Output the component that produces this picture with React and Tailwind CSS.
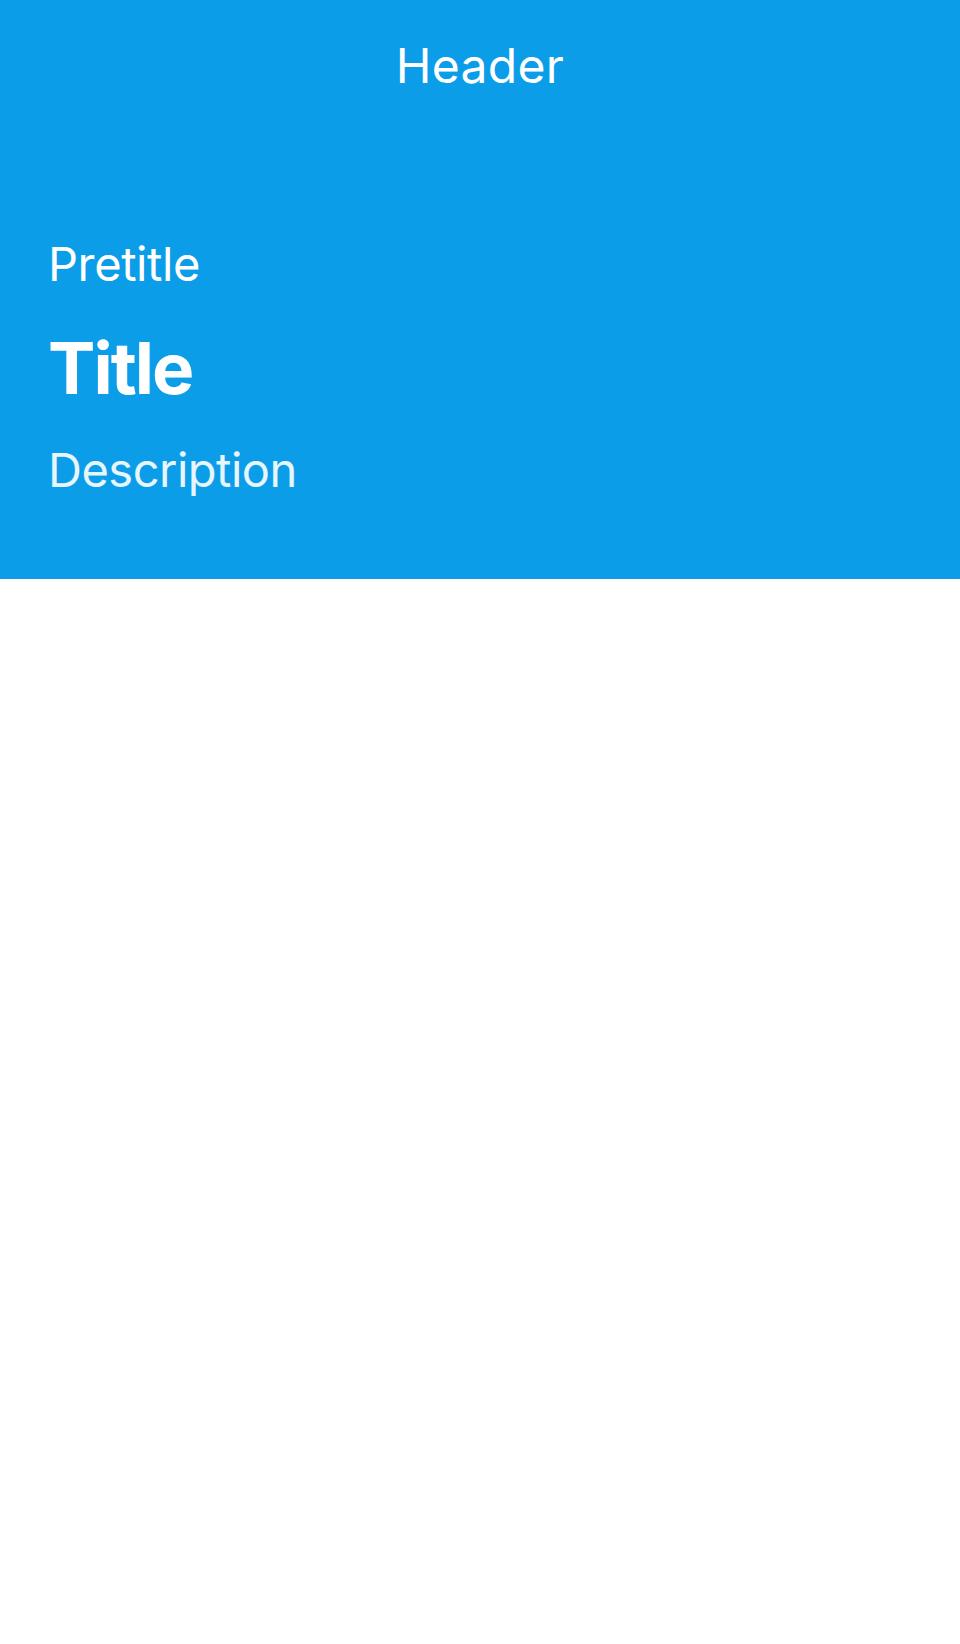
export default function App() {
  return (
    <div className="min-h-screen bg-white font-['Inter',sans-serif] text-white">
      <div className="bg-[#0c9de9]">
        <header className="flex h-[131px] items-center justify-center">
          <h1 className="text-[48px] leading-[48px] tracking-[0.3px]">Header</h1>
        </header>
        <section className="px-[48px] pt-[109px] pb-[85px]">
          <p className="text-[47px] leading-[48px] tracking-[-0.4px]">Pretitle</p>
          <h2 className="mt-[44px] text-[71px] font-bold leading-[72px] tracking-[-2px]">Title</h2>
          <p className="mt-[42px] text-[47px] leading-[48px] tracking-[-0.5px] text-white/90">Description</p>
        </section>
      </div>
    </div>
  );
}
